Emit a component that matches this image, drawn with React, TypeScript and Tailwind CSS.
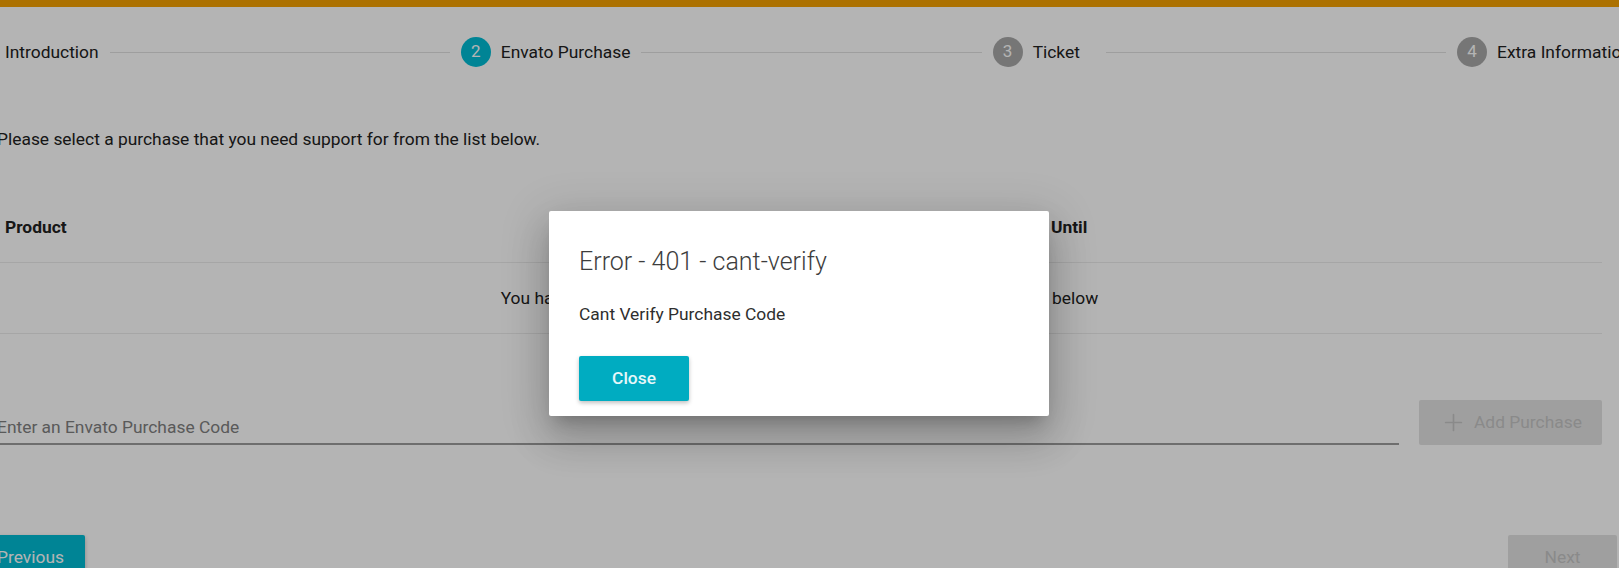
import { Plus } from "lucide-react";

type StepProps = { n: number; label: string; active?: boolean; className?: string };

function Step({ n, label, active, className }: StepProps) {
  return (
    <div className={`flex items-center gap-[10px] ${className ?? ""}`}>
      <span
        className={`flex h-[30px] w-[30px] items-center justify-center rounded-full text-[17px] text-white ${
          active ? "bg-[#00bcd4]" : "bg-[#a8a8a8]"
        }`}
      >
        {n}
      </span>
      <span className="whitespace-nowrap">{label}</span>
    </div>
  );
}

function Line() {
  return <div className="mx-[11px] h-px flex-1 bg-[#e0e0e0]" />;
}

export default function App() {
  return (
    <div className="relative h-[568px] w-[1619px] overflow-hidden bg-white font-['Roboto',sans-serif] text-[#212121]">
      <div className="h-[7px] bg-[#f4a100]" />

      {/* stepper */}
      <div className="ml-[-35px] mt-[30px] flex h-[30px] w-[1666px] items-center text-[17.4px]">
        <Step n={1} label="Introduction" />
        <Line />
        <Step n={2} label="Envato Purchase" active />
        <Line />
        <Step n={3} label="Ticket" className="pr-[15px]" />
        <Line />
        <Step n={4} label="Extra Information" />
      </div>

      <div className="ml-[-3px] w-[1605px]">
        <p className="mt-[59px] text-[17.4px] leading-[26px]">
          Please select a purchase that you need support for from the list below.
        </p>

        {/* purchases table */}
        <div className="mt-[41px] text-[17.4px]">
          <div className="grid h-[70px] grid-cols-[600px_360px_1fr] items-center border-b border-[#ececec] font-bold">
            <div className="px-[8px]">Product</div>
            <div className="px-[8px]">Purchase Code</div>
            <div className="px-[8px]">Supported Until</div>
          </div>
          <div className="flex h-[71px] items-center justify-center border-b border-[#ececec]">
            You have no purchases yet, please add your purchase code in the fields below
          </div>
        </div>

        <div className="mt-[66px] flex items-start gap-[20px]">
          <input
            className="h-[45px] flex-1 border-b-2 border-[#9c9c9c] bg-transparent pt-[10px] text-[17.4px] outline-none placeholder:text-[#808080]"
            placeholder="Enter an Envato Purchase Code"
          />
          <button
            disabled
            className="flex h-[45px] w-[183px] items-center gap-[7px] rounded-[2px] bg-[#e2e2e2] pl-[21px] text-[17.4px] text-[#c4c4c4]"
          >
            <Plus size={27} strokeWidth={1.5} />
            Add Purchase
          </button>
        </div>

        <div className="ml-[-21px] mt-[90px] flex w-[1641px] justify-between text-[17.4px]">
          <button className="h-[45px] w-[109px] rounded-[2px] bg-[#00bcd4] text-white shadow-[0_2px_4px_rgba(0,0,0,0.25)]">
            Previous
          </button>
          <button disabled className="h-[45px] w-[109px] rounded-[2px] bg-[#e2e2e2] text-[#c4c4c4]">
            Next
          </button>
        </div>
      </div>

      {/* dialog */}
      <div className="absolute inset-0 bg-black/[0.294]" />
      <div className="absolute left-[549px] top-[211px] h-[205px] w-[500px] rounded-[2px] bg-white px-[30px] pt-[35px] shadow-[0_11px_15px_-7px_rgba(0,0,0,0.2),0_24px_38px_3px_rgba(0,0,0,0.14),0_9px_46px_8px_rgba(0,0,0,0.12)]">
        <h2 className="text-[25px] font-light leading-[32px] text-[#3d3d3d]">Error - 401 - cant-verify</h2>
        <p className="mt-[24px] text-[17.4px] leading-[24px] text-[#2e2e2e]">Cant Verify Purchase Code</p>
        <button className="mt-[30px] h-[45px] w-[110px] rounded-[2px] bg-[#00acc1] text-[17.4px] font-medium text-white/90 shadow-[0_2px_4px_rgba(0,0,0,0.25)]">
          Close
        </button>
      </div>
    </div>
  );
}
